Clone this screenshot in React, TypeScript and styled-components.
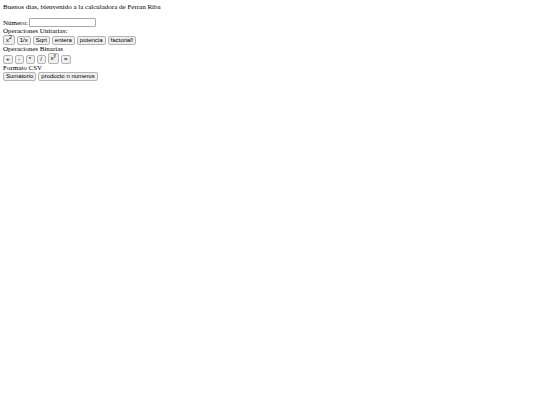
import React, { useState } from 'react';
import styled, { createGlobalStyle } from 'styled-components';

const GlobalStyle = createGlobalStyle`
  body {
    margin: 0;
    background: #fff;
    color: #000;
    font: 7px/8px "Liberation Serif", "Times New Roman", serif;
  }
`;

const Page = styled.main`
  padding: 3px;
`;

const Greeting = styled.p`
  margin: 0 0 7px;
`;

const Field = styled.div`
  display: flex;
  align-items: center;
  gap: 1px;
`;

const NumberInput = styled.input`
  box-sizing: border-box;
  width: 67px;
  height: 9px;
  margin: 0;
  padding: 0 1px;
  border: 1px solid #aaa;
  border-radius: 1px;
  background: #fff;
  font: 6px/7px "Liberation Sans", Arial, sans-serif;
`;

const GroupTitle = styled.div`
  line-height: 8px;
`;

const ButtonRow = styled.div`
  display: flex;
  align-items: flex-end;
  gap: 2px;
`;

const Button = styled.button<{ $height?: number }>`
  box-sizing: border-box;
  min-width: 9px;
  height: ${({ $height = 9 }) => $height}px;
  margin: 0;
  padding: 0 2px;
  border: 1px solid #b4b4b4;
  border-radius: 2px;
  background: #efefef;
  color: #000;
  font: 6px/7px "Liberation Sans", Arial, sans-serif;
  white-space: nowrap;

  sup {
    font-size: 5px;
    line-height: 0;
    vertical-align: super;
  }
`;

export default function App() {
  const [value, setValue] = useState('');
  return (
    <>
      <GlobalStyle />
      <Page>
        <Greeting>Buenos días, bienvenido a la calculadora de Ferran Riba</Greeting>
        <Field>
          <label htmlFor="numero">Número:</label>
          <NumberInput id="numero" type="text" value={value} onChange={(e) => setValue(e.target.value)} />
        </Field>
        <GroupTitle>Operaciones Unitarias:</GroupTitle>
        <ButtonRow>
          <Button type="button" $height={10}>x<sup>2</sup></Button>
          <Button type="button">1/x</Button>
          <Button type="button">Sqrt</Button>
          <Button type="button">entera</Button>
          <Button type="button">potencia</Button>
          <Button type="button">factorial!</Button>
        </ButtonRow>
        <GroupTitle>Operaciones Binarias</GroupTitle>
        <ButtonRow>
          <Button type="button">+</Button>
          <Button type="button">-</Button>
          <Button type="button">*</Button>
          <Button type="button">/</Button>
          <Button type="button" $height={11}>x<sup>y</sup></Button>
          <Button type="button">=</Button>
        </ButtonRow>
        <GroupTitle>Formato CSV</GroupTitle>
        <ButtonRow>
          <Button type="button">Sumatorio</Button>
          <Button type="button">producto n numeros</Button>
        </ButtonRow>
      </Page>
    </>
  );
}
